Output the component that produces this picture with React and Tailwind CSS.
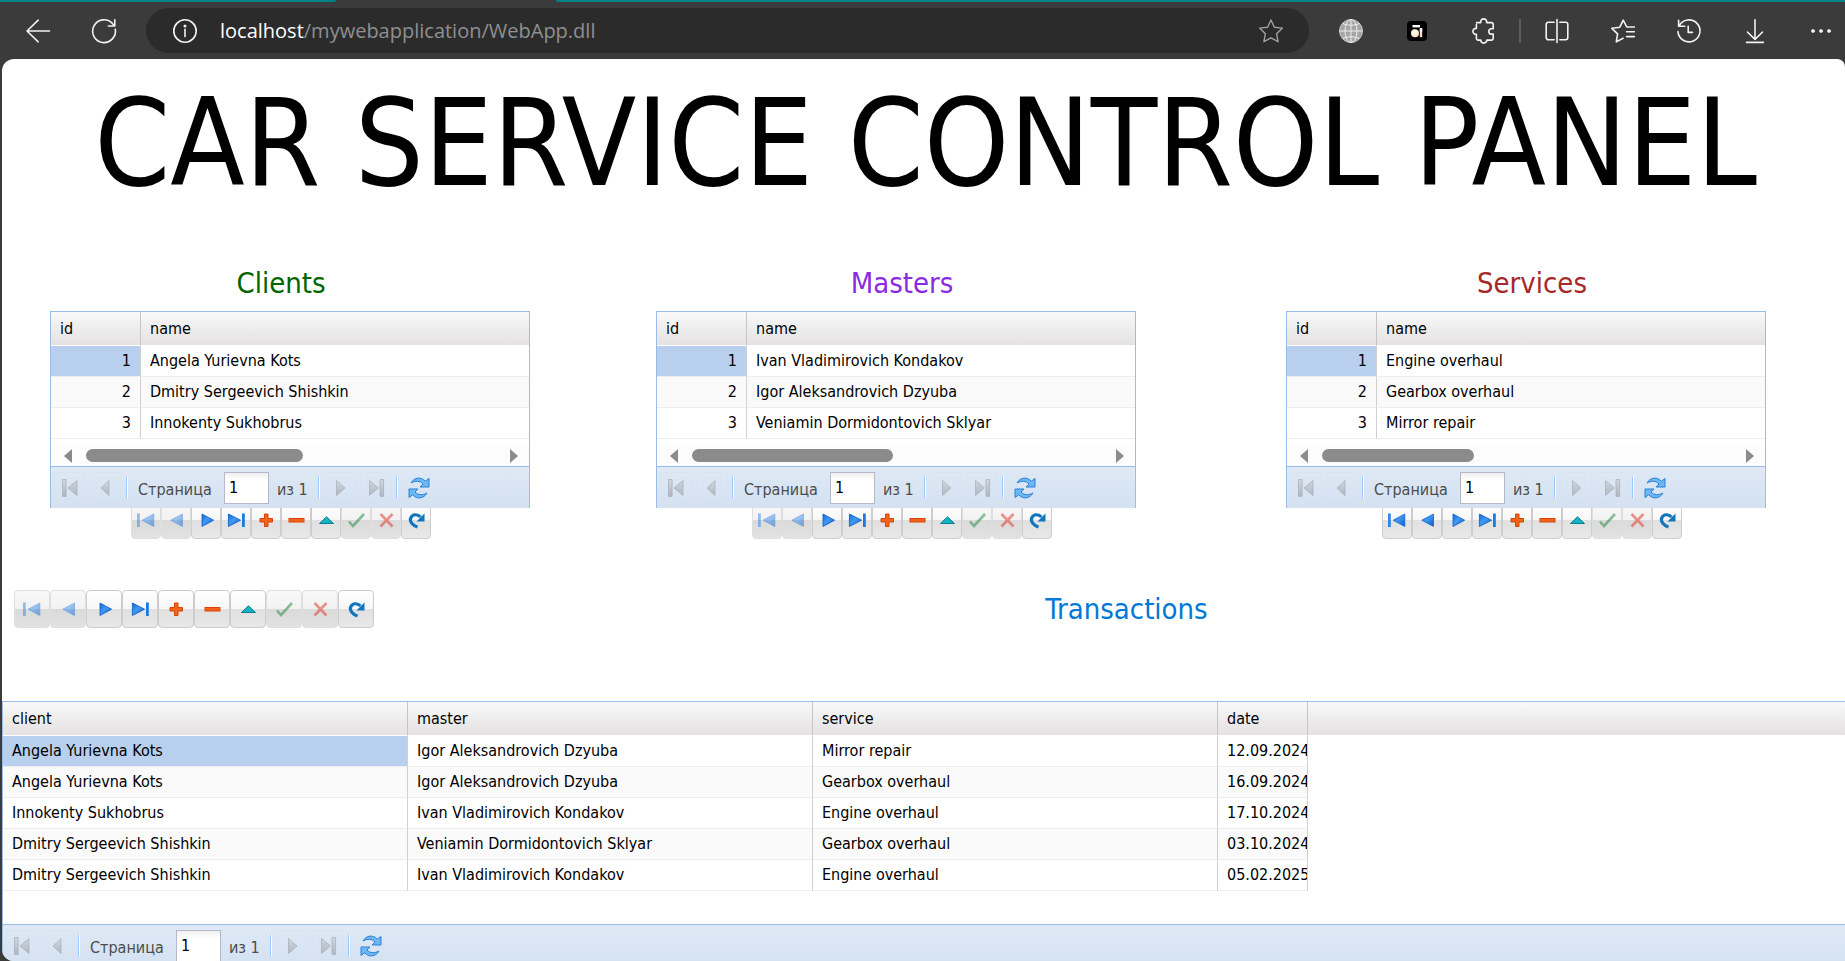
const clients = ["Angela Yurievna Kots", "Dmitry Sergeevich Shishkin", "Innokenty Sukhobrus"];
const masters = ["Ivan Vladimirovich Kondakov", "Igor Aleksandrovich Dzyuba", "Veniamin Dormidontovich Sklyar"];
const services = ["Engine overhaul", "Gearbox overhaul", "Mirror repair"];

const transactions = [
  ["Angela Yurievna Kots", "Igor Aleksandrovich Dzyuba", "Mirror repair", "12.09.2024"],
  ["Angela Yurievna Kots", "Igor Aleksandrovich Dzyuba", "Gearbox overhaul", "16.09.2024"],
  ["Innokenty Sukhobrus", "Ivan Vladimirovich Kondakov", "Engine overhaul", "17.10.2024"],
  ["Dmitry Sergeevich Shishkin", "Veniamin Dormidontovich Sklyar", "Gearbox overhaul", "03.10.2024"],
  ["Dmitry Sergeevich Shishkin", "Ivan Vladimirovich Kondakov", "Engine overhaul", "05.02.2025"],
];

/* ---------- browser toolbar ---------- */

const line = { fill: "none", stroke: "#f2f2f2", strokeWidth: 1.6, strokeLinecap: "round", strokeLinejoin: "round" };

function ToolbarButton({ label, children }) {
  return (
    <button type="button" aria-label={label} className="flex size-8 shrink-0 items-center justify-center">
      <svg viewBox="0 0 24 24" className="size-6 overflow-visible" {...line}>{children}</svg>
    </button>
  );
}

function BrowserBar() {
  return (
    <header className="shrink-0">
      <div className="flex h-0.5">
        <div className="w-[336px] rounded-br-sm bg-[#038387]" />
        <div className="w-[220px]" />
        <div className="flex-1 rounded-bl-sm bg-[#038387]" />
      </div>
      <div className="flex h-[57px] items-center pr-2 pl-[22px]">
        <ToolbarButton label="Back">
          <path d="M23.5 12H1M12.2 1.2 1 12l11.2 10.8" />
        </ToolbarButton>
        <div className="ml-[34px]">
          <ToolbarButton label="Refresh">
            <path d="M23.3 10.2A11.4 11.4 0 1 1 20.4 4.4L22.6 7M22.8 .8V7H16.4" />
          </ToolbarButton>
        </div>
        <form className="ml-[26px] flex h-[45px] flex-1 items-center rounded-full bg-[#2b2b2b] pr-[22px] pl-[23px]" onSubmit={(e) => e.preventDefault()}>
          <ToolbarButton label="Site information">
            <circle cx="12" cy="12" r="11.2" />
            <path d="M12 10.4v7.2" />
            <circle cx="12" cy="6.9" r="0.7" fill="#f2f2f2" />
          </ToolbarButton>
          <a href="#address" className="ml-[19px] flex-1 font-['Open_Sans','Noto_Sans',sans-serif] text-xl leading-7 whitespace-nowrap text-[#8f8f8f]">
            <span className="text-white">localhost</span>/mywebapplication/WebApp.dll
          </a>
          <button type="button" aria-label="Add to favourites" className="flex size-8 items-center justify-center">
            <svg viewBox="0 0 24 24" className="size-6" fill="none" stroke="#a0a0a0" strokeWidth="1.4" strokeLinejoin="round">
              <path d="m12 1 3.4 7.2 8.1.9-5.9 5.6 1.5 8L12 18.8l-7.1 3.9 1.5-8L.5 9.1l8.1-.9z" />
            </svg>
          </button>
        </form>
        <nav aria-label="Browser tools" className="ml-[26px] flex items-center gap-[34px]">
          <button type="button" aria-label="Web extension" className="flex size-8 items-center justify-center">
            <svg viewBox="0 0 24 24" className="size-6" fill="none" stroke="#ececec" strokeWidth="1">
              <circle cx="12" cy="12" r="11.5" fill="#a6a6a6" stroke="#c4c4c4" />
              <ellipse cx="12" cy="12" rx="6" ry="11.5" />
              <path d="M12 .5v23M.5 12h23M3.6 4.6q8.4 3.4 16.8 0M3.6 19.4q8.4-3.4 16.8 0" />
            </svg>
          </button>
          <button type="button" aria-label="Extension" className="flex size-8 items-center justify-center">
            <svg viewBox="0 0 20 20" className="size-5">
              <rect width="20" height="20" rx="4" fill="#000" />
              <rect x="5.5" y="4" width="7.5" height="2.4" fill="#fff" />
              <circle cx="8" cy="12.2" r="4" fill="#fbe3c4" />
              <circle cx="7.4" cy="11.4" r="2.8" fill="#fff4e6" />
              <path d="M12.8 7.2h2.4v9h-2.4z" fill="#f8d9cf" />
              <path d="M12.8 7.2h2.4v3.4h-2.4z" fill="#fff" />
            </svg>
          </button>
          <ToolbarButton label="Extensions">
            <path d="M5.6 3.6h4.200a3 3 0 1 1 5.800 0h4.800a1.800 1.800 0 0 1 1.800 1.800v4.300h-1.700a2.700 2.700 0 0 0 0 5.400h1.700v4.200a1.800 1.800 0 0 1-1.800 1.800h-4.600a3 3 0 0 1-6 0H7.200a1.800 1.800 0 0 1-1.800-1.800v-4a3 3 0 1 1 0-5.900V5.400" />
          </ToolbarButton>
          <div className="-mx-[14px] h-6 w-0.5 bg-[#5c5c5c]" />
          <ToolbarButton label="Split screen">
            <path d="M12 .5v23M9.2 3.2H3.4A2.2 2.2 0 0 0 1.2 5.4v13.2a2.2 2.2 0 0 0 2.2 2.2h5.8M14.8 3.2h5.8a2.2 2.2 0 0 1 2.2 2.2v13.2a2.2 2.2 0 0 1-2.2 2.2h-5.8" />
          </ToolbarButton>
          <ToolbarButton label="Favourites">
            <path d="M23.4 8H15.8L12.2 1.2 8.8 8.2.8 9.3l5.8 5.6-1.3 8 6.8-3.6M15.6 12.8h7.8M15.6 17.6h7.8" />
          </ToolbarButton>
          <ToolbarButton label="History">
            <path d="M1.6 1.2v6h6.2M2.2 6.8A11 11 0 1 1 1 12.6M11.2 7.2v6.2h4.2" />
          </ToolbarButton>
          <ToolbarButton label="Downloads">
            <path d="M12 .8v19.4M4.4 13 12 20.4 19.6 13M3.6 23.4h16.8" />
          </ToolbarButton>
          <ToolbarButton label="More">
            <g fill="#f2f2f2" strokeWidth="0.6">
              <circle cx="4" cy="12" r="1.6" />
              <circle cx="12" cy="12" r="1.6" />
              <circle cx="20" cy="12" r="1.6" />
            </g>
          </ToolbarButton>
        </nav>
      </div>
    </header>
  );
}

/* ---------- record navigator ---------- */

const navIcons = {
  First: (
    <>
      <rect x="0" y="2.500" width="2.800" height="13.500" fill="#2f86e6" />
      <path d="M16.800 3v12.500L5.200 9.200z" fill="url(#blueFill)" stroke="#1464cf" strokeWidth="0.8" />
    </>
  ),
  Prior: <path d="M15.500 3v12.500L3.800 9.200z" fill="url(#blueFill)" stroke="#1464cf" strokeWidth="0.8" />,
  Next: <path d="M5 3v12.500l11.600-6.300z" fill="url(#blueFill)" stroke="#0d5ccb" strokeWidth="0.8" />,
  Last: (
    <>
      <rect x="15" y="2.500" width="2.800" height="13.500" fill="#1b7ae2" />
      <path d="M1.400 3v12.500L13.600 9.200z" fill="url(#blueFill)" stroke="#0d5ccb" strokeWidth="0.8" />
    </>
  ),
  Insert: <path d="M7.500 3h3.500v4.500h4.500V11H11v4.500H7.500V11H3V7.500h4.500z" fill="#f0641a" stroke="#d9430a" />,
  Delete: <rect x="2" y="7.500" width="15" height="3.500" fill="#f0641a" stroke="#d9430a" />,
  Edit: <path d="M9.500 5.800 16.500 12.500h-14z" fill="#16b3c6" stroke="#0b7f90" />,
  Post: <path d="m2 10.500 4 4.500L17 3" fill="none" stroke="#1f8a3c" strokeWidth="2.600" />,
  Cancel: <path d="m3.500 3 12 12.500m0-12.500-12 12.500" fill="none" stroke="#e0301e" strokeWidth="2.600" />,
  Refresh: (
    <>
      <path d="M10.500 16C6 14.500 2 10.500 3.800 6.800 5.500 3 10.500 2.800 13.500 6" fill="none" stroke="#0f75bd" strokeWidth="3.200" />
      <path d="M17.500 2.500v8H9.500z" fill="#0f75bd" />
    </>
  ),
};

function Navigator({ source, disabled, large }) {
  return (
    <div role="toolbar" aria-label={`${source} records`} className={large ? "flex" : "flex h-[31px] items-end overflow-hidden"}>
      {Object.keys(navIcons).map((name) => (
        <button
          key={name}
          type="button"
          aria-label={`${name} record`}
          disabled={disabled.includes(name)}
          className={
            (large ? "w-9" : "w-[30px]") +
            " flex h-[38px] shrink-0 items-center justify-center rounded border border-[#cdcdcd] bg-[linear-gradient(#ffffff,#f7f7f7_50%,#e0e0e0_50%,#e8e8e8)] disabled:border-[#dedede] disabled:bg-[linear-gradient(#f8f8f8,#f2f2f2_50%,#dadada_50%,#e2e2e2)]"
          }
        >
          <svg viewBox="0 0 18 18" className={disabled.includes(name) ? "size-[18px] opacity-50" : "size-[18px]"}>
            {navIcons[name]}
          </svg>
        </button>
      ))}
    </div>
  );
}

/* ---------- paging bar ---------- */

function PageButton({ label, children }) {
  return (
    <button type="button" disabled aria-label={label} className="flex size-8 shrink-0 items-center justify-center rounded border border-[#d9e3ef]">
      <svg viewBox="0 0 18 20" className="h-5 w-[18px]" fill="url(#greyFill)" stroke="#a9b2bc" strokeWidth="0.8">{children}</svg>
    </button>
  );
}

function Divider() {
  return <div className="h-[21px] w-0.5 shrink-0 border-l border-[#98c8ff] bg-white" />;
}

function Pager({ id }) {
  return (
    <div className="flex h-[42px] shrink-0 items-center overflow-hidden border-t border-[#99bce8] bg-linear-to-b from-[#dfe9f5] to-[#d3e1f1] pl-[3px] text-base leading-5 whitespace-nowrap text-[#4c4c4c]">
      <PageButton label="First page">
        <path d="M1.500 1.500h3.600v17H1.500zM16 2.500v15L7 10z" />
      </PageButton>
      <div className="ml-1">
        <PageButton label="Previous page">
          <path d="M12 2.500v15L4 10z" />
        </PageButton>
      </div>
      <div className="mr-2.5 ml-1"><Divider /></div>
      <label htmlFor={id} className="w-[76px] pt-1">Страница</label>
      <input id={id} defaultValue="1" className="ml-2.5 h-8 w-[45px] border border-[#b5b8c8] bg-white bg-linear-to-b from-[#f0f0f0] to-white to-25% px-1 text-base text-black outline-none" />
      <span className="ml-2 w-9 pt-1">из 1</span>
      <div className="mr-1 ml-[5px]"><Divider /></div>
      <PageButton label="Next page">
        <path d="M5.500 2.500v15l8.500-7.500z" />
      </PageButton>
      <div className="ml-1">
        <PageButton label="Last page">
          <path d="M13 1.500h3.600v17H13zM2.500 2.500v15l9-7.500z" />
        </PageButton>
      </div>
      <div className="mr-2.5 ml-1"><Divider /></div>
      <button type="button" aria-label="Reload" className="shrink-0">
        <svg viewBox="0 0 22 22" className="size-[22px]" fill="#6bb8f5" stroke="#2c7fd6" strokeLinejoin="round">
          <path d="M3 6C6 .5 13-.8 17.300 4.200L21 1.500V10h-9l3-3C12 3.600 7.500 3.600 3 6z" />
          <path d="M19 16C16 21.500 9 22.800 4.700 17.800L1 20.500V12h9l-3 3c3 3.400 7.500 3.400 12 1z" />
        </svg>
      </button>
    </div>
  );
}

/* ---------- grids ---------- */

const headCell = "h-[34px] border-b border-b-white px-[9px] text-left font-normal";
const headRule = "border-r border-r-[#c5c5c5]";
const cell = "h-[31px] overflow-hidden border-r border-b border-r-[#d0d0d0] border-b-[#ededed] whitespace-nowrap";
const headFill = "bg-linear-to-b from-[#f9f9f9] to-[#e3e1e1]";

function ListPanel({ id, title, color, rows, thumb, shift, disabled }) {
  return (
    <section className="flex flex-col">
      <h2 className={`${color} ${shift} text-center text-[29px] leading-9`}>{title}</h2>
      <div className="mt-2.5 border border-b-0 border-[#99bce8] bg-white">
        <table className="w-full table-fixed border-separate border-spacing-0 text-base leading-5">
          <colgroup>
            <col className="w-[90px]" />
            <col />
          </colgroup>
          <thead className={headFill}>
            <tr>
              <th className={`${headCell} ${headRule}`}>id</th>
              <th className={headCell}>name</th>
            </tr>
          </thead>
          <tbody>
            {rows.map((name, i) => (
              <tr key={name} className="even:bg-[#fafafa]">
                <td className={`${cell} px-[9px] text-right ${i === 0 ? "bg-[#b8cfee]" : ""}`}>{i + 1}</td>
                <td className="h-[31px] border-b border-[#ededed] px-[9px] whitespace-nowrap">{name}</td>
              </tr>
            ))}
          </tbody>
        </table>
        <div className="mt-1.5 flex h-[21px] items-center bg-[#fcfcfc] pr-[11px] pl-[13px]">
          <svg viewBox="0 0 8 14" className="h-3.5 w-2"><path d="M8 0v14L0 7z" fill="#8b8b8b" /></svg>
          <div className="mx-3.5 flex-1">
            <div className={`${thumb} h-[13px] rounded-full bg-[#8b8b8b]`} />
          </div>
          <svg viewBox="0 0 8 14" className="h-3.5 w-2"><path d="M0 0v14l8-7z" fill="#8b8b8b" /></svg>
        </div>
        <Pager id={id} />
      </div>
      <div className={`${shift} flex justify-center`}>
        <Navigator source={title} disabled={disabled} />
      </div>
    </section>
  );
}

function TransactionsGrid() {
  return (
    <section className="flex flex-1 flex-col border-t border-l border-[#99bce8]">
      <div className="flex">
        <table className="w-[1305px] table-fixed border-separate border-spacing-0 text-base leading-5">
          <colgroup>
            <col />
            <col className="w-[405px]" />
            <col className="w-[405px]" />
            <col className="w-[90px]" />
          </colgroup>
          <thead className={headFill}>
            <tr>
              {["client", "master", "service", "date"].map((name) => (
                <th key={name} className={`${headCell} ${headRule}`}>{name}</th>
              ))}
            </tr>
          </thead>
          <tbody>
            {transactions.map((row, i) => (
              <tr key={i} className="even:bg-[#fafafa]">
                {row.map((value, j) => (
                  <td key={j} className={`${cell} pl-[9px] ${i === 0 && j === 0 ? "bg-[#b8cfee]" : ""}`}>{value}</td>
                ))}
              </tr>
            ))}
          </tbody>
        </table>
        <div className={`${headFill} h-[34px] flex-1 border-b border-white`} />
      </div>
      <div className="mt-[33px]">
        <Pager id="page-transactions" />
      </div>
    </section>
  );
}

export default function App() {
  return (
    <div className="flex h-screen flex-col overflow-hidden bg-[#3b3b3b] font-['DejaVu_Sans_Condensed','DejaVu_Sans',sans-serif] text-black">
      <svg className="absolute size-0" aria-hidden="true">
        <defs>
          <linearGradient id="blueFill" x1="0" y1="0" x2="1" y2="1">
            <stop offset="0" stopColor="#1468d6" />
            <stop offset="0.45" stopColor="#3f9af2" />
            <stop offset="1" stopColor="#0a55c8" />
          </linearGradient>
          <linearGradient id="greyFill" x1="0" y1="0" x2="0" y2="1">
            <stop offset="0" stopColor="#d2d8de" />
            <stop offset="1" stopColor="#adb5be" />
          </linearGradient>
        </defs>
      </svg>
      <BrowserBar />
      <main className="ml-0.5 flex flex-1 flex-col overflow-hidden rounded-l-xl rounded-tr-lg bg-white">
        <h1 className="mt-[11px] pl-1 text-center text-[121px] leading-[148px] whitespace-nowrap">CAR SERVICE CONTROL PANEL</h1>
        <div className="mt-[47px] grid grid-cols-[48fr_480fr_126fr_480fr_150fr_480fr_79fr]">
          <div className="col-start-2">
            <ListPanel id="page-clients" title="Clients" color="text-[#006400]" rows={clients} thumb="w-[53%]" shift="pr-[18px]" disabled={["First", "Prior", "Post", "Cancel"]} />
          </div>
          <div className="col-start-4">
            <ListPanel id="page-masters" title="Masters" color="text-[#8a2be2]" rows={masters} thumb="w-[49%]" shift="pl-3" disabled={["First", "Prior", "Post", "Cancel"]} />
          </div>
          <div className="col-start-6">
            <ListPanel id="page-services" title="Services" color="text-[#a52a2a]" rows={services} thumb="w-[37%]" shift="pl-3" disabled={["Post", "Cancel"]} />
          </div>
        </div>
        <div className="mt-[51px] mb-[73px] flex items-center pl-3">
          <Navigator source="Transaction" large disabled={["First", "Prior", "Post", "Cancel"]} />
          <h2 className="flex-1 pl-[34px] text-center text-[29px] leading-9 text-[#0078d7]">Transactions</h2>
        </div>
        <TransactionsGrid />
      </main>
    </div>
  );
}
